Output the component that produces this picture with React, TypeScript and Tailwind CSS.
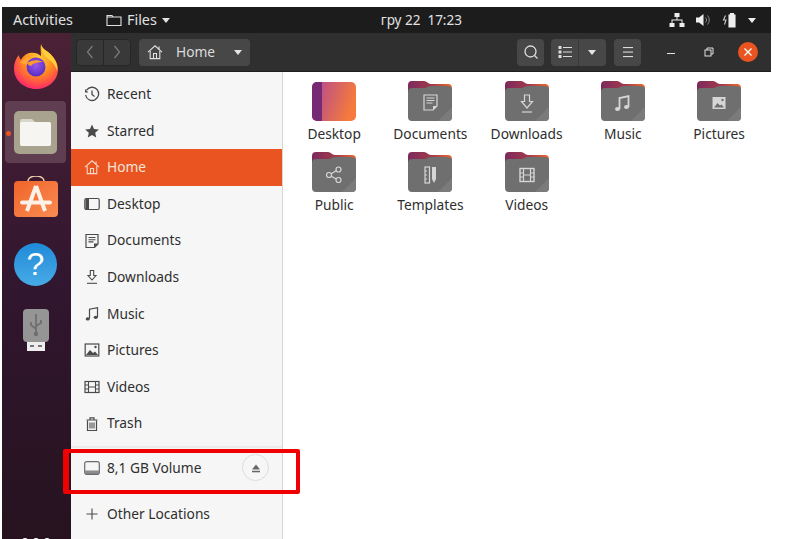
import type { ReactNode } from "react";

const FONT = "font-['Noto_Sans',sans-serif]";

function Sym({ children, size = 16, className = "" }: { children: ReactNode; size?: number; className?: string }) {
  return (
    <svg width={size} height={size} viewBox="0 0 16 16" fill="none" stroke="currentColor" strokeWidth="1.1" className={className}>
      {children}
    </svg>
  );
}

const glyphs = {
  recent: (
    <>
      <path d="M2.600 4.200A6.600 6.600 0 1 1 1.600 9" strokeWidth="1.300" />
      <path d="M1 3v3.400h3.400" fill="currentColor" stroke="none" />
      <path d="M8 4.500V8.500l2.500 2" strokeWidth="1.300" />
    </>
  ),
  star: <path d="M8 1.500l2 4.500 4.800.5-3.600 3.200 1 4.800L8 12.100l-4.200 2.400 1-4.800L1.200 6.500 6 6z" fill="currentColor" stroke="none" />,
  home: (
    <>
      <path d="M1 8.200L8 1.800l7 6.400" />
      <path d="M3.200 7v7.600h9.600V7" />
      <path d="M6.500 14.500V9.500h3v5" />
      <path d="M12 2.500v3" />
    </>
  ),
  desktop: (
    <>
      <rect x="0.800" y="2.500" width="14.400" height="11" rx="1.500" strokeWidth="1.200" />
      <path d="M1.500 3h3.500v10H1.500z" fill="currentColor" stroke="none" />
    </>
  ),
  documents: (
    <>
      <path d="M2 1.500h12v9.500l-3.500 3.500H2z" strokeWidth="1.200" />
      <path d="M4.500 4.500h7M4.500 6.700h7M4.500 8.900h5" />
      <path d="M10 14.500V10.500h4z" fill="currentColor" stroke="none" />
    </>
  ),
  downloads: (
    <>
      <path d="M6.300 1.500h3.400v5h2.300L8 11 4 6.500h2.300z" />
      <path d="M3 14.300h10" />
    </>
  ),
  music: (
    <>
      <path d="M5.500 12.800V3.200l8-1.500v9.500" strokeWidth="1.200" />
      <ellipse cx="3.700" cy="12.900" rx="2" ry="1.600" fill="currentColor" stroke="none" />
      <ellipse cx="11.700" cy="11.300" rx="2" ry="1.600" fill="currentColor" stroke="none" />
    </>
  ),
  pictures: (
    <>
      <rect x="1.200" y="2" width="13.600" height="12" strokeWidth="1.200" />
      <path d="M2 13l4-5 3 3 2-1.500 3 3.500z" fill="currentColor" stroke="none" />
      <circle cx="11.500" cy="5" r="1.200" fill="currentColor" stroke="none" />
    </>
  ),
  videos: (
    <>
      <rect x="1" y="2.500" width="14" height="11" strokeWidth="1.200" />
      <path d="M4.500 2.500v11M11.500 2.500v11M1 6h3.500M1 10h3.500M11.500 6H15M11.500 10H15M4.500 8h7" />
    </>
  ),
  trash: (
    <>
      <path d="M2.500 4h11M6 3.500V1.800h4v1.700" strokeWidth="1.200" />
      <path d="M3.500 4.500v10h9v-10" strokeWidth="1.200" />
      <path d="M6 6.500v6M8 6.500v6M10 6.500v6" />
    </>
  ),
  drive: (
    <>
      <rect x="0.700" y="1.700" width="14.600" height="12.600" rx="2" strokeWidth="1.200" />
      <path d="M1.200 10.500h13.600v2a1.500 1.500 0 0 1-1.500 1.500H2.700a1.500 1.500 0 0 1-1.500-1.500z" fill="currentColor" stroke="none" opacity="0.75" />
    </>
  ),
  plus: <path d="M8 2.500v11M2.500 8h11" strokeWidth="1.100" />,
};

const places: { label: string; icon: keyof typeof glyphs; active?: boolean }[] = [
  { label: "Recent", icon: "recent" },
  { label: "Starred", icon: "star" },
  { label: "Home", icon: "home", active: true },
  { label: "Desktop", icon: "desktop" },
  { label: "Documents", icon: "documents" },
  { label: "Downloads", icon: "downloads" },
  { label: "Music", icon: "music" },
  { label: "Pictures", icon: "pictures" },
  { label: "Videos", icon: "videos" },
  { label: "Trash", icon: "trash" },
];

function SideRow({ label, icon, active }: { label: string; icon: keyof typeof glyphs; active?: boolean }) {
  return (
    <div className={`flex h-[36.6px] items-center gap-[7px] pl-[13px] text-[13.75px] ${active ? "bg-[#e95420] text-[#f8e4da]" : "text-[#2e2e2e]"}`}>
      <Sym className={active ? "text-[#f8d8c8]" : "text-[#4a4a4a]"}>{glyphs[icon]}</Sym>
      <span>{label}</span>
    </div>
  );
}

function FolderArt({ children }: { children: ReactNode }) {
  return (
    <svg width="44" height="41" viewBox="0 0 44 41">
      <defs>
        <linearGradient id="tab" x1="0" y1="0" x2="1" y2="0">
          <stop offset="0" stopColor="#7c2a5c" />
          <stop offset="0.55" stopColor="#a13a4c" />
          <stop offset="1" stopColor="#ee6a2c" />
        </linearGradient>
      </defs>
      <path d="M0 5a4 4 0 0 1 4-4h12c3 0 4 3 7 3h17a4 4 0 0 1 4 4v14H0z" fill="url(#tab)" />
      <path d="M0 12a4 4 0 0 1 4-4h12c3 0 4-2 7-2h17a4 4 0 0 1 4 4v27a4 4 0 0 1-4 4H4a4 4 0 0 1-4-4z" fill="#6f6f6f" />
      <path d="M30 41L44 27v10a4 4 0 0 1-4 4z" fill="#7b7b7b" />
      <g fill="none" stroke="#d6d6d6" strokeWidth="1.200">
        {children}
      </g>
    </svg>
  );
}

function DesktopArt() {
  return (
    <svg width="44" height="41" viewBox="0 0 44 41">
      <defs>
        <linearGradient id="desk" x1="0" y1="0" x2="1" y2="0.300">
          <stop offset="0" stopColor="#b3459a" />
          <stop offset="0.5" stopColor="#d1606a" />
          <stop offset="1" stopColor="#f57a3c" />
        </linearGradient>
      </defs>
      <rect x="0" y="2" width="44" height="39" rx="5" fill="url(#desk)" />
      <path d="M5 2h5v39H5a5 5 0 0 1-5-5V7a5 5 0 0 1 5-5z" fill="#762a74" />
    </svg>
  );
}

const folders: { label: string; art: ReactNode }[] = [
  { label: "Desktop", art: <DesktopArt /> },
  {
    label: "Documents",
    art: (
      <FolderArt>
        <path d="M16 15h13v11l-4 4h-9z" />
        <path d="M18.500 18h8M18.500 20.500h8M18.500 23h6" />
        <path d="M25 30v-4h4z" fill="#d6d6d6" stroke="none" />
      </FolderArt>
    ),
  },
  {
    label: "Downloads",
    art: (
      <FolderArt>
        <path d="M19.500 15h5v6.500h3L22 28l-5.500-6.500h3z" />
        <path d="M17 32h10" />
      </FolderArt>
    ),
  },
  {
    label: "Music",
    art: (
      <FolderArt>
        <path d="M18.500 29V18l9-2v11" strokeWidth="1.800" />
        <ellipse cx="16.500" cy="29" rx="2.500" ry="2" fill="#d6d6d6" stroke="none" />
        <ellipse cx="25.500" cy="27" rx="2.500" ry="2" fill="#d6d6d6" stroke="none" />
      </FolderArt>
    ),
  },
  {
    label: "Pictures",
    art: (
      <FolderArt>
        <rect x="15.500" y="17" width="13" height="12" fill="#d6d6d6" stroke="none" />
        <path d="M17 27.500l3.500-4.500 2.500 2.500 1.500-1 2.500 3z" fill="#6f6f6f" stroke="none" />
        <circle cx="25.500" cy="20" r="1.200" fill="#6f6f6f" stroke="none" />
      </FolderArt>
    ),
  },
  {
    label: "Public",
    art: (
      <FolderArt>
        <circle cx="17" cy="24" r="2.500" />
        <circle cx="26.500" cy="18.500" r="2.500" />
        <circle cx="26.500" cy="29" r="2.500" />
        <path d="M19.200 22.800l5-3M19.200 25.200l5 2.800" />
      </FolderArt>
    ),
  },
  {
    label: "Templates",
    art: (
      <FolderArt>
        <rect x="17" y="16" width="4.500" height="16" />
        <path d="M17 20h2M17 24h2M17 28h2" />
        <path d="M24 16h4v12l-2 4-2-4z" fill="#d6d6d6" stroke="none" />
      </FolderArt>
    ),
  },
  {
    label: "Videos",
    art: (
      <FolderArt>
        <rect x="15" y="17.500" width="14" height="13" strokeWidth="1.400" />
        <path d="M18.500 17.500v13M25.500 17.500v13M15 22h3.500M15 26h3.500M25.500 22H29M25.500 26H29M18.500 24h7" />
      </FolderArt>
    ),
  },
];

function Firefox() {
  return (
    <svg width="44" height="46" viewBox="0 0 44 46">
      <defs>
        <radialGradient id="ffBody" cx="0.55" cy="0.35" r="0.75">
          <stop offset="0" stopColor="#ffd53a" />
          <stop offset="0.45" stopColor="#ff8a1f" />
          <stop offset="0.8" stopColor="#ff3a5a" />
          <stop offset="1" stopColor="#e8168c" />
        </radialGradient>
        <radialGradient id="ffCore" cx="0.5" cy="0.4" r="0.6">
          <stop offset="0" stopColor="#9b59e8" />
          <stop offset="1" stopColor="#5a2bc4" />
        </radialGradient>
      </defs>
      <path d="M27 1c1 6 8 7 12 13 3 4 5 8 5 12 0 12-10 20-22 20S0 37 0 26c0-6 2-11 5-14 0 2 1 4 2 5 1-3 5-6 8-7 5-1 9 0 12 3 0-4-1-8 0-12z" fill="url(#ffBody)" />
      <path d="M27 1c1 6 8 7 12 13 3 4 5 8 4 14-2-7-6-10-9-12-3-3-7-6-7-15z" fill="#ffcf3a" />
      <path d="M6 20c3-4 8-7 14-6 4 0 7 2 9 4-4-2-8-2-11 0-2 1-3 2-4 3-3 0-5 0-8-1z" fill="#ffa533" />
      <circle cx="22" cy="24" r="9.500" fill="url(#ffCore)" />
      <path d="M13 20c4-3 11-4 16-1-5 0-10 1-12 4-1 0-3-1-4-3z" fill="#ff9a2e" />
    </svg>
  );
}

function Dock() {
  return (
    <div className="relative flex w-[69px] flex-col items-center overflow-hidden bg-gradient-to-b from-[#4b2135] via-[#31162f] to-[#26131f] pr-[2px]">
      <div className="flex h-[66px] items-center justify-center">
        <Firefox />
      </div>
      <div className="flex h-[66px] items-center justify-center">
        <div className="flex h-[62px] w-[61px] items-center justify-center rounded-[4px] bg-[#5f3e52]">
          <svg width="43" height="43" viewBox="0 0 43 43">
            <rect width="43" height="43" rx="5" fill="#a8a38f" />
            <path d="M6 10a2 2 0 0 1 2-2h10l3 3h14a2 2 0 0 1 2 2v20a2 2 0 0 1-2 2H8a2 2 0 0 1-2-2z" fill="#d9d7cb" />
            <path d="M6 13a2 2 0 0 1 2-2h27a2 2 0 0 1 2 2v20a2 2 0 0 1-2 2H8a2 2 0 0 1-2-2z" fill="#f6f5f1" />
          </svg>
        </div>
      </div>
      <span className="absolute left-[4px] top-[98px] h-[5px] w-[5px] rounded-full bg-[#e95420]" />
      <div className="flex h-[66px] items-start justify-center pt-[11px]">
        <svg width="44" height="42" viewBox="0 0 44 42">
          <defs>
            <linearGradient id="store" x1="0" y1="0" x2="1" y2="1">
              <stop offset="0" stopColor="#f0642a" />
              <stop offset="1" stopColor="#f98c52" />
            </linearGradient>
          </defs>
          <path d="M14 6V5a8 5 0 0 1 16 0v1" fill="none" stroke="#f0d0a8" strokeWidth="1.500" />
          <rect y="5" width="44" height="36" rx="4" fill="url(#store)" />
          <path d="M22 10L13 35M22 10l9 25" stroke="#fdf0e6" strokeWidth="4" fill="none" />
          <path d="M8 26.500h28" stroke="#fdf0e6" strokeWidth="4" strokeLinecap="round" />
        </svg>
      </div>
      <div className="flex h-[66px] items-center justify-center">
        <div className="flex h-[43px] w-[43px] items-center justify-center rounded-full bg-gradient-to-b from-[#1f8ad8] to-[#47abe6] font-['Liberation_Sans',sans-serif] text-[32px] leading-none text-white">
          ?
        </div>
      </div>
      <div className="flex h-[66px] items-center justify-center">
        <svg width="26" height="42" viewBox="0 0 26 42">
          <rect x="4" y="29" width="18" height="13" fill="#eeeeee" />
          <rect x="7" y="36" width="4" height="2" fill="#777" />
          <rect x="15" y="36" width="4" height="2" fill="#777" />
          <rect width="26" height="33" rx="4" fill="#959595" />
          <path d="M13 5v20M13 20l-5-4v-3M13 17l5-3v-3" stroke="#6f6f6f" strokeWidth="1.800" fill="none" />
          <circle cx="13" cy="25" r="2.200" fill="#6f6f6f" />
        </svg>
      </div>
      <div className="absolute bottom-[-5px] left-[20px] flex gap-[5px]">
        <span className="h-[6px] w-[6px] rounded-full bg-white" />
        <span className="h-[6px] w-[6px] rounded-full bg-white" />
        <span className="h-[6px] w-[6px] rounded-full bg-white" />
      </div>
    </div>
  );
}

function TopBar() {
  return (
    <div className="flex h-[26px] items-center bg-[#1c1c1c] text-[14.4px] text-[#e2e2e2]">
      <span className="ml-[11px]">Activities</span>
      <svg width="16" height="16" viewBox="0 0 16 16" fill="none" stroke="currentColor" strokeWidth="1.100" className="ml-[33px]">
        <path d="M1 3.500h5l1 1.500h8v8.500H1zM1 5h6" />
      </svg>
      <span className="ml-[5px]">Files</span>
      <span className="ml-[5px] h-0 w-0 border-x-[4.500px] border-t-[5px] border-x-transparent border-t-[#e2e2e2]" />
      <span className="ml-[211px] whitespace-pre text-[13.5px]">гру 22  17:23</span>
      <div className="ml-auto mr-[15px] flex items-center gap-[10.3px]">
        <svg width="16" height="16" viewBox="0 0 16 16" fill="#eee">
          <rect x="5.500" y="1" width="5" height="4" />
          <rect x="0.500" y="11" width="5" height="4" />
          <rect x="10.500" y="11" width="5" height="4" />
          <path d="M7.500 5h1v2.500H13.500V11h-1V8.500h-9V11h-1V7.500h5z" />
        </svg>
        <svg width="16" height="16" viewBox="0 0 16 16" fill="#eee">
          <path d="M1 5.500h3L8.500 2v12L4 10.500H1z" />
          <path d="M10.500 5.500a3.500 3.500 0 0 1 0 5M12.500 3.500a6.500 6.500 0 0 1 0 9" fill="none" stroke="#888" strokeWidth="1" />
        </svg>
        <svg width="16" height="16" viewBox="0 0 16 16" fill="none">
          <path d="M3.500 3.500L1.500 8h2.500L2.500 12.500" stroke="#cccccc" strokeWidth="1.100" />
          <path d="M7 3h1.500V1.500h3V3H13v12H7z" stroke="#eee" strokeWidth="1.100" fill="#eee" />
        </svg>
        <span className="h-0 w-0 border-x-[4.500px] border-t-[5px] border-x-transparent border-t-[#eeeeee]" />
      </div>
    </div>
  );
}

function Header() {
  const btn = "flex h-[27px] items-center justify-center rounded-[4px] bg-[#474747] text-[#d4d4d4]";
  return (
    <div className="flex h-[39px] shrink-0 items-center border-b border-[#1e1e1e] bg-[#2f2f2f] pl-[5px] text-[14px]">
      <div className="flex h-[27px] w-[55px] rounded-[4px] border border-[#262626] bg-[#393939] text-[#7d7d7d]">
        <div className="flex flex-1 items-center justify-center border-r border-[#262626]">
          <svg width="10" height="16" viewBox="0 0 10 16" fill="none" stroke="currentColor" strokeWidth="1.200">
            <path d="M7.500 2L2.500 8l5 6" />
          </svg>
        </div>
        <div className="flex flex-1 items-center justify-center">
          <svg width="10" height="16" viewBox="0 0 10 16" fill="none" stroke="currentColor" strokeWidth="1.200">
            <path d="M2.500 2l5 6-5 6" />
          </svg>
        </div>
      </div>
      <div className={`${btn} ml-[8px] w-[111px] justify-start pl-[8px]`}>
        <Sym className="text-[#e2e2e2]">{glyphs.home}</Sym>
        <span className="ml-[13px] text-[13.75px] text-[#dcdcdc]">Home</span>
        <span className="ml-[19px] h-0 w-0 border-x-[4.500px] border-t-[5px] border-x-transparent border-t-[#e4e4e4]" />
      </div>
      <div className={`${btn} ml-[267px] w-[27px]`}>
        <svg width="16" height="16" viewBox="0 0 16 16" fill="none" stroke="#dcdcdc" strokeWidth="1.300">
          <circle cx="7.500" cy="7.500" r="5.500" />
          <path d="M11.500 11.500l3 3" />
        </svg>
      </div>
      <div className={`${btn} ml-[7px] w-[55px] justify-start`}>
        <div className="flex h-full w-[28px] items-center justify-center border-r border-[#3a3a3a]">
          <svg width="14" height="14" viewBox="0 0 14 14" fill="#dcdcdc">
            <rect x="0.500" y="1" width="3" height="3" />
            <rect x="0.500" y="5.500" width="3" height="3" />
            <rect x="0.500" y="10" width="3" height="3" />
            <rect x="5" y="2" width="9" height="1" />
            <rect x="5" y="6.500" width="9" height="1" />
            <rect x="5" y="11" width="9" height="1" />
          </svg>
        </div>
        <span className="ml-[9px] h-0 w-0 border-x-[4.500px] border-t-[5px] border-x-transparent border-t-[#e4e4e4]" />
      </div>
      <div className={`${btn} ml-[8px] w-[27px]`}>
        <svg width="12" height="12" viewBox="0 0 12 12" fill="#dcdcdc">
          <rect x="1" y="1" width="10" height="1.100" />
          <rect x="1" y="5.500" width="10" height="1.100" />
          <rect x="1" y="10" width="10" height="1.100" />
        </svg>
      </div>
      <span className="ml-[26px] mt-[3px] h-[1.500px] w-[8px] bg-[#e4e4e4]" />
      <svg width="10" height="10" viewBox="0 0 10 10" fill="none" stroke="#e0e0e0" className="ml-[29px]">
        <rect x="1" y="3" width="6" height="6" />
        <path d="M3 3V1h6v6H7" />
      </svg>
      <div className="ml-[24px] flex h-[20px] w-[20px] items-center justify-center rounded-full bg-[#e95420]">
        <svg width="10" height="10" viewBox="0 0 10 10" stroke="#fff" strokeWidth="1.300">
          <path d="M1.500 1.500l7 7M8.500 1.500l-7 7" />
        </svg>
      </div>
    </div>
  );
}

function Sidebar() {
  return (
    <div className="flex w-[212px] shrink-0 flex-col border-r border-[#d5d5d5] bg-[#f6f6f6] pt-[4px]">
      {places.map((p) => (
        <SideRow key={p.label} {...p} />
      ))}
      <div className="mt-[4px] h-[2px] bg-[#ebebeb]" />
      <div className="mt-[2px] flex h-[36px] items-center gap-[7px] pl-[13px] text-[13.75px] text-[#2e2e2e]">
        <Sym className="text-[#6a6a6a]">{glyphs.drive}</Sym>
        <span>8,1 GB Volume</span>
        <span className="ml-auto mr-[13px] flex h-[27px] w-[27px] items-center justify-center rounded-full border border-[#dcdcdc]">
          <svg width="12" height="12" viewBox="0 0 12 12" fill="#666">
            <path d="M6 2.500l4 5h-8z" />
            <rect x="2" y="8.800" width="8" height="1.500" />
          </svg>
        </span>
      </div>
      <div className="mt-[10px] flex h-[36px] items-center gap-[7px] pl-[13px] text-[13.75px] text-[#2e2e2e]">
        <Sym className="text-[#4a4a4a]">{glyphs.plus}</Sym>
        <span>Other Locations</span>
      </div>
    </div>
  );
}

export default function App() {
  return (
    <div className={`relative h-[539px] w-[789px] overflow-hidden bg-white pl-[2px] pt-[7px] ${FONT}`}>
      <div className="flex h-[532px] w-[769px] flex-col">
        <TopBar />
        <div className="flex min-h-0 flex-1">
          <Dock />
          <div className="flex min-w-0 flex-1 flex-col">
            <Header />
            <div className="flex min-h-0 flex-1">
              <Sidebar />
              <div className="grid flex-1 grid-cols-[repeat(5,96.25px)] content-start bg-white pl-[3px] pt-[8px]">
                {folders.map((f) => (
                  <div key={f.label} className="flex h-[71px] flex-col items-center text-[13.75px] text-[#2e2e2e]">
                    {f.art}
                    <span className="mt-[3px] leading-[20px]">{f.label}</span>
                  </div>
                ))}
              </div>
            </div>
          </div>
        </div>
      </div>
      <div className="absolute left-[63px] top-[449px] h-[45px] w-[237px] rounded-[2px] border-[4px] border-l-[6px] border-[#f00000]" />
    </div>
  );
}
